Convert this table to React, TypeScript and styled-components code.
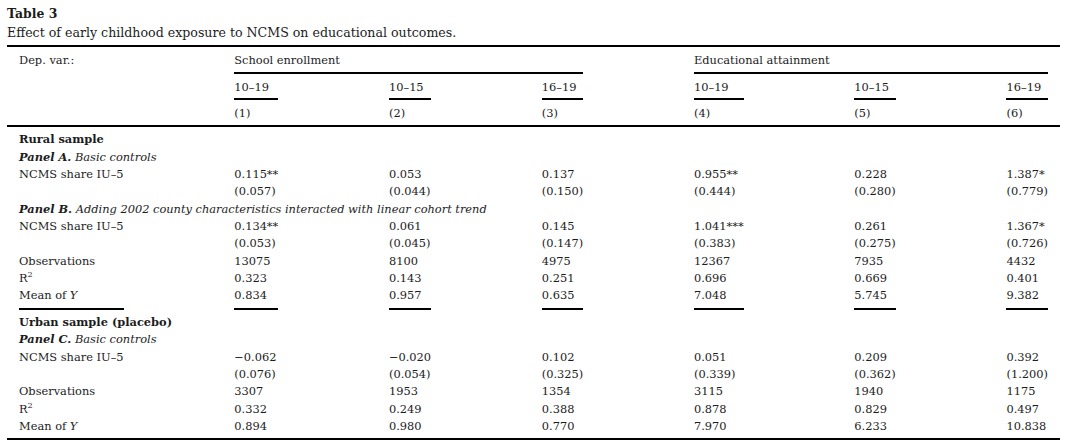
import React from "react";
import styled, { createGlobalStyle } from "styled-components";

const GlobalStyle = createGlobalStyle`
  html, body { margin: 0; padding: 0; background: #ffffff; }
  body {
    font-family: "DejaVu Serif", "Liberation Serif", serif;
    color: #1c1c1c;
    -webkit-font-smoothing: antialiased;
  }
`;

const Page = styled.div`
  width: 1053px;
  padding: 4px 5px 0 7px;
`;

const Caption = styled.div`
  margin-bottom: 3px;
`;

const TableLabel = styled.div`
  font-weight: bold;
  font-size: 12.4px;
  line-height: 19px;
`;

const TableTitle = styled.div`
  font-size: 12.6px;
  line-height: 19px;
`;

const Grid = styled.div`
  display: grid;
  grid-template-columns: 12px max-content repeat(6, 1fr max-content) 12px;
  border-top: 2px solid #000;
  border-bottom: 2px solid #000;
  padding-bottom: 3px;
  font-size: 11.4px;
`;

const HeadCell = styled.div<{ $start: number; $end?: number; $rule?: boolean; $pb: number }>`
  grid-column: ${(p) => p.$start} / ${(p) => p.$end ?? p.$start + 1};
  padding: 6px 0 ${(p) => p.$pb}px;
  line-height: 14px;
  white-space: nowrap;
  border-bottom: 2px solid ${(p) => (p.$rule ? "#000" : "transparent")};
`;

const FullRule = styled.div`
  grid-column: 1 / -1;
  height: 2px;
  background: #000;
  margin-bottom: 4.3px;
`;

const Cell = styled.div<{ $start: number; $span?: boolean; $under?: boolean; $top?: number }>`
  grid-column: ${(p) => (p.$span ? `${p.$start} / -1` : `${p.$start} / ${p.$start + 1}`)};
  line-height: 17.33px;
  white-space: nowrap;
  margin-top: ${(p) => p.$top ?? 0}px;
  padding-bottom: ${(p) => (p.$under ? 3.5 : 0)}px;
  border-bottom: ${(p) => (p.$under ? "2px solid #000" : "none")};
`;

const Strong = styled.span`
  font-weight: bold;
`;

const Em = styled.span`
  font-style: italic;
`;

const Sup = styled.span`
  font-size: 0.72em;
  vertical-align: super;
  line-height: 0;
`;

const dataCol = (i: number) => 4 + i * 2;

const ranges = ["10–19", "10–15", "16–19", "10–19", "10–15", "16–19"];

type RowProps = { label?: React.ReactNode; values: string[]; under?: boolean };

const DataRow = ({ label, values, under }: RowProps) => (
  <>
    <Cell $start={2} $under={under}>{label}</Cell>
    {values.map((v, i) => (
      <Cell key={i} $start={dataCol(i)} $under={under}>
        {v}
      </Cell>
    ))}
  </>
);

const PanelLine = ({ name, text }: { name: string; text: string }) => (
  <Cell $start={2} $span>
    <Em>
      <Strong>{name}</Strong> {text}
    </Em>
  </Cell>
);

const R2 = (
  <>
    R<Sup>2</Sup>
  </>
);
const MeanY = (
  <>
    Mean of <Em>Y</Em>
  </>
);

export default function App() {
  return (
    <>
      <GlobalStyle />
      <Page>
        <Caption>
          <TableLabel>Table 3</TableLabel>
          <TableTitle>Effect of early childhood exposure to NCMS on educational outcomes.</TableTitle>
        </Caption>
        <Grid>
          <HeadCell $start={2} $pb={5}>Dep. var.:</HeadCell>
          <HeadCell $start={4} $end={9} $rule $pb={5}>School enrollment</HeadCell>
          <HeadCell $start={10} $end={15} $rule $pb={5}>Educational attainment</HeadCell>

          {ranges.map((r, i) => (
            <HeadCell key={`r${i}`} $start={dataCol(i)} $rule $pb={4}>
              {r}
            </HeadCell>
          ))}
          {ranges.map((_, i) => (
            <HeadCell key={`n${i}`} $start={dataCol(i)} $pb={3}>
              ({i + 1})
            </HeadCell>
          ))}
          <FullRule />

          <Cell $start={2} $span>
            <Strong>Rural sample</Strong>
          </Cell>
          <PanelLine name="Panel A." text="Basic controls" />
          <DataRow label="NCMS share IU–5" values={["0.115**", "0.053", "0.137", "0.955**", "0.228", "1.387*"]} />
          <DataRow values={["(0.057)", "(0.044)", "(0.150)", "(0.444)", "(0.280)", "(0.779)"]} />
          <PanelLine
            name="Panel B."
            text="Adding 2002 county characteristics interacted with linear cohort trend"
          />
          <DataRow label="NCMS share IU–5" values={["0.134**", "0.061", "0.145", "1.041***", "0.261", "1.367*"]} />
          <DataRow values={["(0.053)", "(0.045)", "(0.147)", "(0.383)", "(0.275)", "(0.726)"]} />
          <DataRow label="Observations" values={["13075", "8100", "4975", "12367", "7935", "4432"]} />
          <DataRow label={R2} values={["0.323", "0.143", "0.251", "0.696", "0.669", "0.401"]} />
          <DataRow label={MeanY} under values={["0.834", "0.957", "0.635", "7.048", "5.745", "9.382"]} />

          <Cell $start={2} $span $top={4}>
            <Strong>Urban sample (placebo)</Strong>
          </Cell>
          <PanelLine name="Panel C." text="Basic controls" />
          <DataRow label="NCMS share IU–5" values={["−0.062", "−0.020", "0.102", "0.051", "0.209", "0.392"]} />
          <DataRow values={["(0.076)", "(0.054)", "(0.325)", "(0.339)", "(0.362)", "(1.200)"]} />
          <DataRow label="Observations" values={["3307", "1953", "1354", "3115", "1940", "1175"]} />
          <DataRow label={R2} values={["0.332", "0.249", "0.388", "0.878", "0.829", "0.497"]} />
          <DataRow label={MeanY} values={["0.894", "0.980", "0.770", "7.970", "6.233", "10.838"]} />
        </Grid>
      </Page>
    </>
  );
}
